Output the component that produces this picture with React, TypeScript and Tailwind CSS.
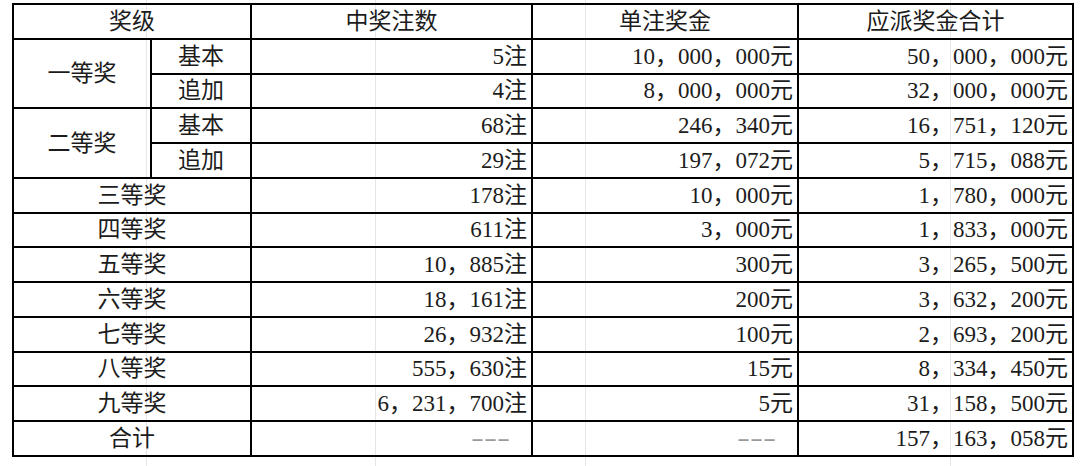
import React from "react"

type Row = {
  label: string
  sub?: string
  span?: number
  count: string
  unit: string
  total: string
}

const rows: Row[] = [
  { label: "一等奖", sub: "基本", span: 2, count: "5注", unit: "10,000,000元", total: "50,000,000元" },
  { label: "", sub: "追加", count: "4注", unit: "8,000,000元", total: "32,000,000元" },
  { label: "二等奖", sub: "基本", span: 2, count: "68注", unit: "246,340元", total: "16,751,120元" },
  { label: "", sub: "追加", count: "29注", unit: "197,072元", total: "5,715,088元" },
  { label: "三等奖", count: "178注", unit: "10,000元", total: "1,780,000元" },
  { label: "四等奖", count: "611注", unit: "3,000元", total: "1,833,000元" },
  { label: "五等奖", count: "10,885注", unit: "300元", total: "3,265,500元" },
  { label: "六等奖", count: "18,161注", unit: "200元", total: "3,632,200元" },
  { label: "七等奖", count: "26,932注", unit: "100元", total: "2,693,200元" },
  { label: "八等奖", count: "555,630注", unit: "15元", total: "8,334,450元" },
  { label: "九等奖", count: "6,231,700注", unit: "5元", total: "31,158,500元" },
  { label: "合计", count: "---", unit: "---", total: "157,163,058元" },
]

// the sheet renders commas full width
const fmt = (s: string) => s.replace(/,/g, "，")

function Num({ v }: { v: string }) {
  if (v === "---") {
    return <span className="inline-block origin-right scale-x-[1.7] pr-[10px] text-[#9a9a9a]">---</span>
  }
  return <span>{fmt(v)}</span>
}

const cell = "border-2 border-black h-[34.75px] p-0 leading-none"

export default function App() {
  return (
    <div
      className="relative w-[1080px] h-[466px] bg-white text-[#1c1c1c] text-[23px]"
      style={{ fontFamily: '"Liberation Serif", "Noto Sans CJK SC", serif' }}
    >
      {/* faint sheet gridlines behind the table */}
      <div className="absolute left-[146px] top-0 h-full w-px bg-[#e6e6e6]" />
      <div className="absolute left-[375px] top-0 h-full w-px bg-[#e6e6e6]" />
      <div className="absolute left-[585px] top-0 h-full w-px bg-[#e6e6e6]" />
      <div className="absolute left-[950px] top-0 h-full w-px bg-[#e6e6e6]" />

      <div className="relative pl-[12px] pt-[3px]">
        <table className="w-[1060px] table-fixed border-collapse">
          <colgroup>
            <col className="w-[138px]" />
            <col className="w-[100px]" />
            <col className="w-[281px]" />
            <col className="w-[266px]" />
            <col className="w-[275px]" />
          </colgroup>
          <tbody>
            <tr>
              <td colSpan={2} className={`${cell} text-center`}>奖级</td>
              <td className={`${cell} text-center`}>中奖注数</td>
              <td className={`${cell} text-center`}>单注奖金</td>
              <td className={`${cell} text-center`}>应派奖金合计</td>
            </tr>
            {rows.map((r, i) => (
              <tr key={i}>
                {r.sub ? (
                  <>
                    {r.span && (
                      <td rowSpan={r.span} className={`${cell} text-center`}>
                        {r.label}
                      </td>
                    )}
                    <td className={`${cell} text-center`}>{r.sub}</td>
                  </>
                ) : (
                  <td colSpan={2} className={`${cell} text-center`}>
                    {r.label}
                  </td>
                )}
                <td className={`${cell} text-right pr-[4px]`}>
                  <Num v={r.count} />
                </td>
                <td className={`${cell} text-right pr-[4px]`}>
                  <Num v={r.unit} />
                </td>
                <td className={`${cell} text-right pr-[4px]`}>
                  <Num v={r.total} />
                </td>
              </tr>
            ))}
          </tbody>
        </table>
      </div>
    </div>
  )
}
